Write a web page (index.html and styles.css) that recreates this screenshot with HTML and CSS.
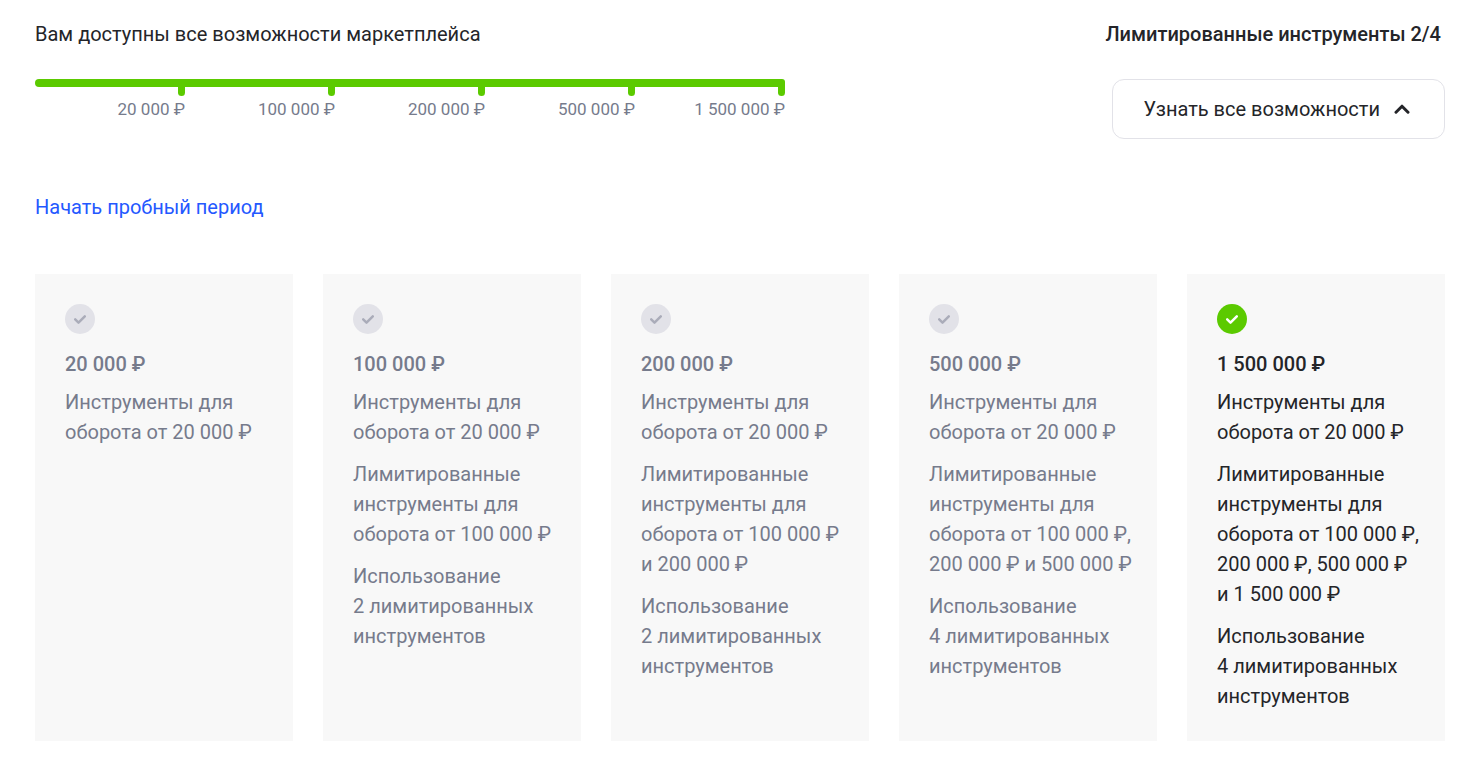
FILE: index.html
```html
<!DOCTYPE html>
<html lang="ru">

<head>
    <meta charset="UTF-8">
    <meta name="viewport" content="width=device-width, initial-scale=1">
    <title>Возможности маркетплейса</title>
    <link rel="stylesheet" href="styles.css">
</head>

<body>
    <svg class="sprite" aria-hidden="true">
        <symbol id="check" viewBox="0 0 30 30">
            <path d="M10.2 15.4l3.3 3.2 6.3-6.3" />
        </symbol>
    </svg>

    <div class="page">
        <div class="top">
            <div class="progress">
                <p class="heading">Вам доступны все возможности маркетплейса</p>
                <div class="bar"></div>
                <ul class="steps">
                    <li>20&nbsp;000&nbsp;₽</li>
                    <li>100&nbsp;000&nbsp;₽</li>
                    <li>200&nbsp;000&nbsp;₽</li>
                    <li>500&nbsp;000&nbsp;₽</li>
                    <li>1&nbsp;500&nbsp;000&nbsp;₽</li>
                </ul>
            </div>
            <div class="limits">
                <p class="heading bold">Лимитированные инструменты 2/4</p>
                <button class="toggle" type="button">
                    Узнать все возможности
                    <svg class="arrow" viewBox="0 0 16 10" aria-hidden="true">
                        <path d="M2 8.2l6-6 6 6" />
                    </svg>
                </button>
            </div>
        </div>

        <a class="trial" href="#">Начать пробный период</a>

        <div class="cards">
            <div class="card">
                <svg class="mark"><use href="#check" /></svg>
                <h3>20&nbsp;000&nbsp;₽</h3>
                <p>Инструменты для оборота от&nbsp;20&nbsp;000&nbsp;₽</p>
            </div>
            <div class="card">
                <svg class="mark"><use href="#check" /></svg>
                <h3>100&nbsp;000&nbsp;₽</h3>
                <p>Инструменты для оборота от&nbsp;20&nbsp;000&nbsp;₽</p>
                <p>Лимитированные инструменты для оборота от&nbsp;100&nbsp;000&nbsp;₽</p>
                <p>Использование 2&nbsp;лимитированных инструментов</p>
            </div>
            <div class="card">
                <svg class="mark"><use href="#check" /></svg>
                <h3>200&nbsp;000&nbsp;₽</h3>
                <p>Инструменты для оборота от&nbsp;20&nbsp;000&nbsp;₽</p>
                <p>Лимитированные инструменты для оборота от&nbsp;100&nbsp;000&nbsp;₽ и&nbsp;200&nbsp;000&nbsp;₽</p>
                <p>Использование 2&nbsp;лимитированных инструментов</p>
            </div>
            <div class="card">
                <svg class="mark"><use href="#check" /></svg>
                <h3>500&nbsp;000&nbsp;₽</h3>
                <p>Инструменты для оборота от&nbsp;20&nbsp;000&nbsp;₽</p>
                <p>Лимитированные инструменты для оборота от&nbsp;100&nbsp;000&nbsp;₽, 200&nbsp;000&nbsp;₽ и&nbsp;500&nbsp;000&nbsp;₽</p>
                <p>Использование 4&nbsp;лимитированных инструментов</p>
            </div>
            <div class="card active">
                <svg class="mark"><use href="#check" /></svg>
                <h3>1&nbsp;500&nbsp;000&nbsp;₽</h3>
                <p>Инструменты для оборота от&nbsp;20&nbsp;000&nbsp;₽</p>
                <p>Лимитированные инструменты для оборота от&nbsp;100&nbsp;000&nbsp;₽, 200&nbsp;000&nbsp;₽, 500&nbsp;000&nbsp;₽ и&nbsp;1&nbsp;500&nbsp;000&nbsp;₽</p>
                <p>Использование 4&nbsp;лимитированных инструментов</p>
            </div>
        </div>
    </div>
</body>

</html>
```
FILE: styles.css
```css
* {
    box-sizing: border-box;
    margin: 0;
    padding: 0;
}

body {
    background: #fff;
    color: #242529;
    font-family: Roboto, "Noto Sans", sans-serif;
    font-size: 20px;
    line-height: 30px;
}

.sprite {
    display: none;
}

.page {
    padding: 19px 22px 28px 35px;
}

.top {
    display: flex;
    justify-content: space-between;
    gap: 30px;
    margin-bottom: 53px;
}

.heading {
    margin-bottom: 30px;
}

.bold {
    padding-right: 4px;
    font-weight: 500;
}

/* шкала оборота */
.progress {
    flex: 0 1 750px;
}

.bar {
    height: 8px;
    background: #5bca00;
    border-radius: 4px 3px 0 4px;
}

.steps {
    display: flex;
    list-style: none;
}

.steps li {
    flex: 1;
    color: #767b8c;
    font-size: 17px;
    line-height: 26px;
    text-align: right;
    white-space: nowrap;
}

.steps li::before {
    content: "";
    display: block;
    width: 7px;
    height: 9px;
    margin-left: auto;
    background: #5bca00;
    border-radius: 0 0 4px 4px;
}

.limits {
    display: flex;
    flex-direction: column;
    align-items: flex-end;
}

.toggle {
    display: flex;
    align-items: center;
    gap: 14px;
    height: 60px;
    padding: 0 34px 0 31px;
    background: #fff;
    border: 1px solid #e2e2e8;
    border-radius: 12px;
    color: inherit;
    font: inherit;
    cursor: pointer;
}

.arrow {
    width: 16px;
    height: 10px;
    fill: none;
    stroke: #242529;
    stroke-width: 3;
    stroke-linecap: round;
    stroke-linejoin: round;
}

.trial {
    display: inline-block;
    margin-bottom: 52px;
    color: #2458ff;
    text-decoration: none;
    vertical-align: top;
}

/* карточки уровней */
.cards {
    display: grid;
    grid-template-columns: repeat(5, 1fr);
    gap: 30px;
}

.card {
    padding: 30px 20px 30px 30px;
    background: #f8f8f8;
    color: #767b8c;
}

.card h3 {
    margin-bottom: 8px;
    font-size: 20px;
    font-weight: 500;
}

.card p + p {
    margin-top: 12px;
}

.mark {
    display: block;
    width: 30px;
    height: 30px;
    margin-bottom: 15px;
    background: #e2e2e8;
    border-radius: 50%;
    fill: none;
    stroke: #aaacb9;
    stroke-width: 2.5;
    stroke-linecap: round;
    stroke-linejoin: round;
}

.active {
    color: #242529;
}

.active .mark {
    background: #5bca00;
    stroke: #fff;
}
```
